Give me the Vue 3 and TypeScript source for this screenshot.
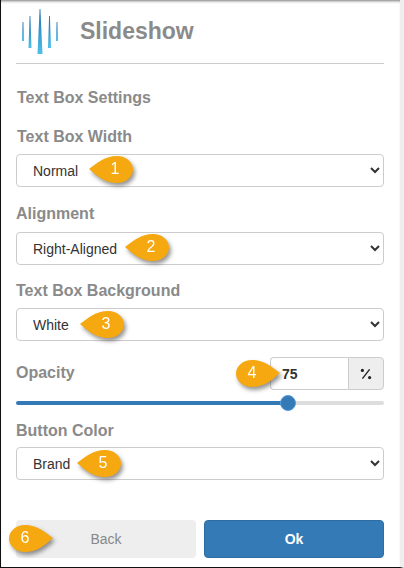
<script setup lang="ts">
import { ref } from 'vue'

const opacity = ref(75)

interface Field {
  label: string
  value: string
  options: string[]
  badge: number
  badgeClass: string
  extra?: string
}

const topFields: Field[] = [
  { label: 'Text Box Width', value: 'Normal', options: ['Normal', 'Wide'], badge: 1, badgeClass: 'b1', extra: 'first' },
  { label: 'Alignment', value: 'Right-Aligned', options: ['Left-Aligned', 'Right-Aligned'], badge: 2, badgeClass: 'b2' },
  { label: 'Text Box Background', value: 'White', options: ['White', 'Black'], badge: 3, badgeClass: 'b3', extra: 'tight' }
]
const colorField: Field = { label: 'Button Color', value: 'Brand', options: ['Brand', 'White'], badge: 5, badgeClass: 'b5' }
const bars = [
  { x: 0, top: 22, bottom: 41, w: 2 },
  { x: 6.5, top: 16, bottom: 48, w: 3 },
  { x: 15.5, top: 9, bottom: 54, w: 5 },
  { x: 26, top: 16, bottom: 48, w: 3 },
  { x: 34, top: 22, bottom: 41, w: 2 }
]
const leftDrop = 'M1 14 C9 8 17 1 29 1 C38 1 45 7 45 14.5 C45 22 38 28 29 28 C17 28 9 21 1 14 Z'
const rightDrop = 'M45 14 C37 8 29 1 17 1 C8 1 1 7 1 14.5 C1 22 8 28 17 28 C29 28 37 21 45 14 Z'
</script>

<template>
  <div class="frame">
    <header class="head">
      <svg class="logo" width="38" height="48" viewBox="0 8 38 48" aria-hidden="true">
        <defs>
          <linearGradient id="lg" x1="0" y1="0" x2="0" y2="1">
            <stop offset="0" stop-color="#1f6fb0" />
            <stop offset="1" stop-color="#4fc0ea" />
          </linearGradient>
        </defs>
        <polygon
          v-for="b in bars"
          :key="b.x"
          :points="`${b.x + b.w / 2 - 0.4},${b.top} ${b.x + b.w / 2 + 0.4},${b.top} ${b.x + b.w},${b.bottom} ${b.x},${b.bottom}`"
          fill="url(#lg)"
        />
      </svg>
      <span class="title">Slideshow</span>
    </header>

    <h2 class="section">Text Box Settings</h2>

    <div v-for="f in topFields" :key="f.label" class="field" :class="f.extra">
      <label class="label">{{ f.label }}</label>
      <div class="sel-wrap">
        <select class="sel" :value="f.value">
          <option v-for="o in f.options" :key="o">{{ o }}</option>
        </select>
        <span class="badge" :class="f.badgeClass">
          <svg width="46" height="32" viewBox="0 0 46 32"><path :d="leftDrop" fill="#f5a80f" /></svg>
          <span class="num">{{ f.badge }}</span>
        </span>
      </div>
    </div>

    <div class="opacity-row">
      <label class="label op-label">Opacity</label>
      <div class="group">
        <input class="num-input" :value="opacity" readonly />
        <span class="addon">
          <svg width="12" height="12" viewBox="0 0 12 12"><path d="M9.6 1.4 2.4 10.6" stroke="#222" stroke-width="1.4" /><circle cx="2.4" cy="2.4" r="1.6" fill="#222" /><circle cx="9.6" cy="9.6" r="1.6" fill="#222" /></svg>
        </span>
        <span class="badge b4">
          <svg width="46" height="32" viewBox="0 0 46 32"><path :d="rightDrop" fill="#f5a80f" /></svg>
          <span class="num num-r">4</span>
        </span>
      </div>
    </div>
    <input v-model="opacity" class="slider" type="range" min="0" max="100" :style="{ '--pct': '74.5%' }" />

    <div class="field color">
      <label class="label">{{ colorField.label }}</label>
      <div class="sel-wrap">
        <select class="sel" :value="colorField.value">
          <option v-for="o in colorField.options" :key="o">{{ o }}</option>
        </select>
        <span class="badge b5">
          <svg width="46" height="32" viewBox="0 0 46 32"><path :d="leftDrop" fill="#f5a80f" /></svg>
          <span class="num">5</span>
        </span>
      </div>
    </div>

    <footer class="actions">
      <button class="btn back" type="button">Back</button>
      <button class="btn ok" type="button">Ok</button>
      <span class="badge b6">
        <svg width="46" height="32" viewBox="0 0 46 32"><path :d="rightDrop" fill="#f5a80f" /></svg>
        <span class="num num-r">6</span>
      </span>
    </footer>
  </div>
</template>

<style>
html, body { margin: 0; background: #fff; }
</style>

<style scoped>
.frame {
  box-sizing: border-box;
  width: 404px;
  height: 568px;
  padding: 0 16px 0 15px;
  border-left: 1px solid #111;
  border-bottom: 1px solid #111;
  border-right: 4px solid #eee;
  box-shadow: inset 0 3px 3px -2px #777;
  font-family: "Liberation Sans", Arial, sans-serif;
  background: #fff;
  display: flex;
  flex-direction: column;
}
.head {
  height: 64px;
  box-sizing: border-box;
  border-bottom: 1px solid #ccc;
  display: flex;
  align-items: center;
  padding-left: 6px;
  flex: none;
}
.logo { flex: none; }
.title {
  margin-left: 20px;
  font-size: 23px;
  font-weight: 700;
  color: #8a8a8a;
}
.section {
  margin: 25px 0 0;
  font-size: 16px;
  line-height: 17px;
  font-weight: 700;
  color: #8a8a8a;
  padding-left: 1px;
}
.field { margin-top: 18px; }
.field.first { margin-top: 22px; }
.field.tight { margin-top: 17px; }
.label {
  display: block;
  font-size: 16px;
  line-height: 18px;
  font-weight: 700;
  color: #8a8a8a;
}
.first .label { padding-left: 1px; }
.sel-wrap { position: relative; margin-top: 9px; }
.first .sel-wrap, .tight .sel-wrap { margin-top: 8px; }
.sel {
  display: block;
  width: 100%;
  height: 33px;
  box-sizing: border-box;
  padding: 0 12px;
  border: 1px solid #ccc;
  border-radius: 4px;
  background: #fff;
  color: #333;
  font: 14px "Liberation Sans", Arial, sans-serif;
}
.badge {
  position: absolute;
  width: 46px;
  height: 32px;
  filter: drop-shadow(2px 3px 2px rgba(60, 60, 60, 0.55));
}
.badge svg { display: block; }
.num {
  position: absolute;
  left: 8px;
  right: 0;
  top: 4px;
  text-align: center;
  font-size: 16px;
  line-height: 20px;
  color: #fff;
}
.num-r { left: 0; right: 12px; }
.b1 { left: 72px; top: 1px; }
.b2 { left: 108px; top: 1px; }
.b3 { left: 63px; top: 2px; }
.b5 { left: 60px; top: 2px; }
.opacity-row {
  position: relative;
  margin-top: 16px;
  height: 33px;
  display: flex;
  justify-content: space-between;
}
.op-label { margin-top: 7px; }
.group { display: flex; width: 114px; height: 33px; position: relative; }
.num-input {
  box-sizing: border-box;
  width: 78px;
  height: 33px;
  border: 1px solid #ccc;
  border-right: 0;
  border-radius: 4px 0 0 4px;
  padding: 0 0 0 11px;
  font: 700 14px "Liberation Sans", Arial, sans-serif;
  color: #333;
  outline: none;
}
.addon {
  box-sizing: border-box;
  width: 36px;
  height: 33px;
  border: 1px solid #ccc;
  border-radius: 0 4px 4px 0;
  background: #eee;
  display: flex;
  align-items: center;
  justify-content: center;
}
.b4 { left: -35px; top: 2px; }
.slider {
  -webkit-appearance: none;
  appearance: none;
  display: block;
  width: 100%;
  height: 16px;
  margin: 5px 0 0;
  background: transparent;
}
.slider::-webkit-slider-runnable-track {
  height: 4px;
  border-radius: 2px;
  background: linear-gradient(to right, #337ab7 var(--pct), #ddd var(--pct));
}
.slider::-webkit-slider-thumb {
  -webkit-appearance: none;
  width: 16px;
  height: 16px;
  margin-top: -6px;
  border-radius: 50%;
  background: #337ab7;
  border: 1px solid #5b9bd5;
  box-sizing: border-box;
}
.field.color { margin-top: 11px; }
.color .sel-wrap { margin-top: 7px; }
.actions {
  position: relative;
  margin-top: auto;
  margin-bottom: 9px;
  display: flex;
  gap: 8px;
}
.btn {
  flex: 1;
  height: 38px;
  border-radius: 4px;
  font: 14px "Liberation Sans", Arial, sans-serif;
  border: 1px solid transparent;
}
.back { background: #eee; color: #888; }
.ok { background: #337ab7; border-color: #2e6da4; color: #fff; font-weight: 700; }
.b6 { left: -8px; top: 4px; }
</style>
